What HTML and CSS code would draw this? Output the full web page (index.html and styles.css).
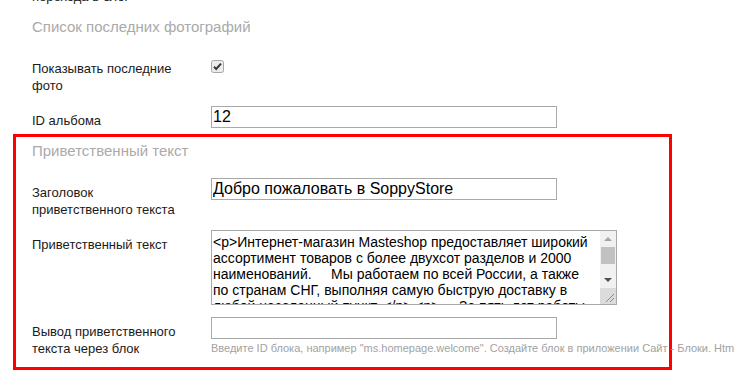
FILE: index.html
```html
<!DOCTYPE html>
<html>

<head>
  <meta charset="utf-8">
  <meta name="viewport" content="width=device-width">
  <title>Настройки главной страницы</title>

  <link rel="stylesheet" href="styles.css">
</head>

<body>
  <form class="page">

    <div class="group">
      <div class="row">
        <label class="row__label" for="blog-link">Показывать ссылку для перехода в блог</label>
        <div class="row__field">
          <span class="checkbox checkbox--off" id="blog-link"></span>
        </div>
      </div>

      <h3 class="group__title">Список последних фотографий</h3>

      <div class="row">
        <label class="row__label">Показывать последние фото</label>
        <div class="row__field">
          <span class="checkbox">
            <svg width="13" height="13" viewBox="0 0 13 13">
              <rect x="0.5" y="0.5" width="12" height="12" rx="2" fill="#ececec" stroke="#a6a6a6" />
              <path d="M3 6.8 L5.2 9 L10 3.6" fill="none" stroke="#3a3a3a" stroke-width="2" />
            </svg>
          </span>
        </div>
      </div>

      <div class="row">
        <label class="row__label" for="album-id">ID альбома</label>
        <div class="row__field">
          <input class="input" id="album-id" type="text" value="12">
        </div>
      </div>
    </div>

    <div class="group group--marked">
      <h3 class="group__title">Приветственный текст</h3>

      <div class="row">
        <label class="row__label" for="welcome-title">Заголовок приветственного текста</label>
        <div class="row__field">
          <input class="input" id="welcome-title" type="text" value="Добро пожаловать в SoppyStore">
        </div>
      </div>

      <div class="row">
        <label class="row__label" for="welcome-text">Приветственный текст</label>
        <div class="row__field">
          <div class="editor">
            <textarea class="editor__text" id="welcome-text">&lt;p&gt;Интернет-магазин Masteshop предоставляет широкий ассортимент товаров с более двухсот разделов и 2000 наименований.     Мы работаем по всей России, а также по странам СНГ, выполняя самую быструю доставку в любой населенный пункт. &lt;/p&gt; &lt;p&gt;     За пять лет работы мы собрали команду профессионалов.&lt;/p&gt;</textarea>
            <div class="scrollbar">
              <span class="scrollbar__btn scrollbar__btn--up"></span>
              <span class="scrollbar__track"><span class="scrollbar__thumb"></span></span>
              <span class="scrollbar__btn scrollbar__btn--down"></span>
              <span class="scrollbar__corner">
                <svg width="16" height="16" viewBox="0 0 16 16">
                  <path d="M14 6 L6 14 M14 10 L10 14" stroke="#8a8a8a" stroke-width="1" />
                </svg>
              </span>
            </div>
          </div>
        </div>
      </div>

      <div class="row">
        <label class="row__label" for="welcome-block">Вывод приветственного текста через блок</label>
        <div class="row__field">
          <input class="input" id="welcome-block" type="text">
          <p class="help">Введите ID блока, например "ms.homepage.welcome". Создайте блок в приложении Сайт - Блоки. Html-код блока заменит приветственный текст.</p>
        </div>
      </div>
    </div>

  </form>
</body>

</html>
```

FILE: styles.css
```css
:root {
  --color-text: #1a1a1a;
  --color-muted: #aaa;
  --color-help: #a2a2a2;
  --color-border: #a9a9a9;
  --color-mark: #f00;
}

html,
body {
  overflow: hidden;
}

body {
  margin: 0;
  background-color: #fff;
  font-family: 'Liberation Sans', Arial, sans-serif;
  font-size: 13px;
  color: var(--color-text);
}

.page {
  margin-top: -35px;
  padding-left: 13px;
}

.group {
  padding: 0 19px;
}

.group--marked {
  width: 621px;
  margin-top: 5px;
  padding: 4px 16px 10px;
  border: 3px solid var(--color-mark);
}

.group__title {
  margin: 0 0 17px;
  font-size: 15px;
  line-height: 20px;
  font-weight: normal;
  color: var(--color-muted);
}

.row {
  display: grid;
  grid-template-columns: 179px 1fr;
  margin-bottom: 12px;
}

.row:last-child {
  margin-bottom: 0;
}

.row__label {
  width: 160px;
  padding-top: 6px;
  line-height: 17px;
}

.row__field {
  min-width: 0;
}

.checkbox {
  display: block;
  width: 13px;
  height: 13px;
  margin-top: 6px;
}

.checkbox svg {
  display: block;
}

.input {
  box-sizing: border-box;
  display: block;
  width: 346px;
  height: 22px;
  margin: 0;
  padding: 0 1px;
  border: 1px solid var(--color-border);
  border-radius: 0;
  font: inherit;
  font-size: 16px;
  color: #000;
  background: #fff;
}

.editor {
  box-sizing: border-box;
  display: flex;
  width: 406px;
  height: 75px;
  border: 1px solid var(--color-border);
}

.editor__text {
  flex: 1;
  margin: 0;
  padding: 3px 7px 3px 1px;
  border: none;
  outline: none;
  resize: none;
  overflow: hidden;
  font: inherit;
  font-size: 14px;
  line-height: normal;
  color: #000;
}

.scrollbar {
  display: flex;
  flex-direction: column;
  width: 16px;
  background-color: #f1f1f1;
}

.scrollbar__btn {
  position: relative;
  height: 16px;
}

.scrollbar__btn::after {
  content: '';
  position: absolute;
  left: 4px;
  width: 0;
  height: 0;
  border-left: 4px solid transparent;
  border-right: 4px solid transparent;
}

.scrollbar__btn--up::after {
  top: 6px;
  border-bottom: 4px solid #a3a3a3;
}

.scrollbar__btn--down::after {
  top: 6px;
  border-top: 4px solid #505050;
}

.scrollbar__track {
  flex: 1;
  padding: 0 1px;
}

.scrollbar__thumb {
  display: block;
  height: 17px;
  background-color: #c1c1c1;
}

.scrollbar__corner {
  height: 16px;
  background-color: #dcdcdc;
}

.scrollbar__corner svg {
  display: block;
}

.help {
  margin: 3px 0 0;
  font-size: 11px;
  line-height: 13px;
  white-space: nowrap;
  color: var(--color-help);
}
```
